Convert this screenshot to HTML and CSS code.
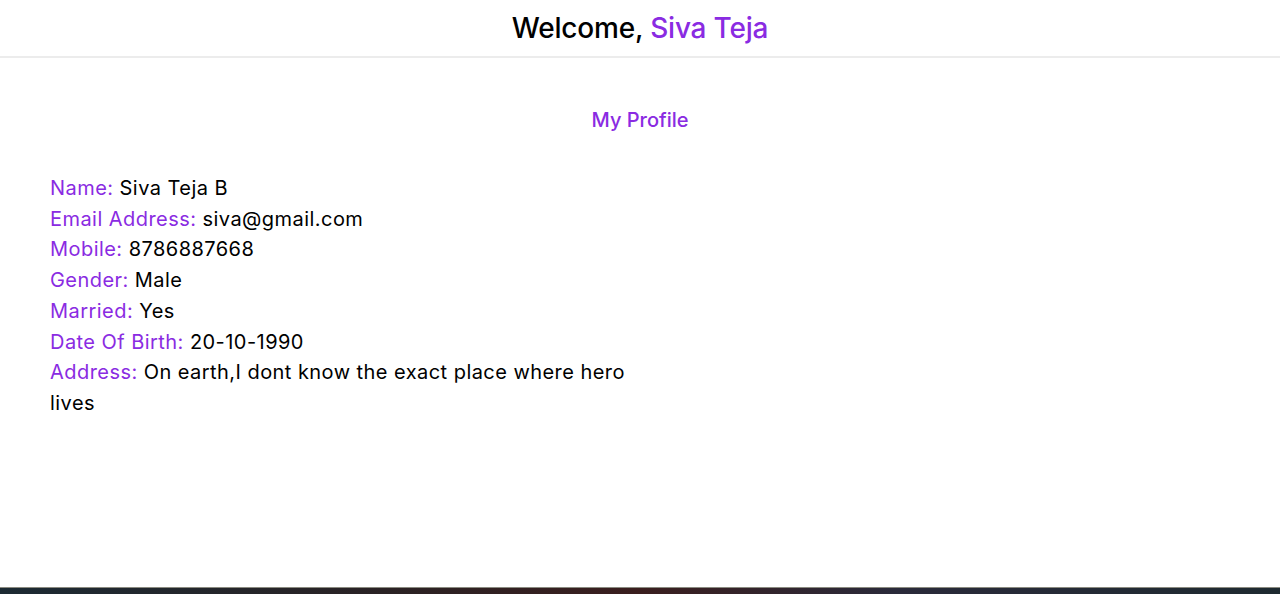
FILE: index.html
```html
<!DOCTYPE html>
<html lang="en">
<head>
<meta charset="utf-8">
<title>Profile</title>
<link rel="stylesheet" href="styles.css">
</head>
<body>
<div class="page">
  <header class="topbar">
    <h1 class="welcome">Welcome, <span class="accent">Siva Teja</span></h1>
  </header>
  <main class="content">
    <h2 class="section-title">My Profile</h2>
    <div class="details">
      <p class="row"><span class="label">Name:</span> Siva Teja B</p>
      <p class="row"><span class="label">Email Address:</span> siva@gmail.com</p>
      <p class="row"><span class="label">Mobile:</span> 8786887668</p>
      <p class="row"><span class="label">Gender:</span> Male</p>
      <p class="row"><span class="label">Married:</span> Yes</p>
      <p class="row"><span class="label">Date Of Birth:</span> 20-10-1990</p>
      <p class="row"><span class="label">Address:</span> On earth,I dont know the exact place where hero lives</p>
    </div>
  </main>
  <div class="taskbar"></div>
</div>
</body>
</html>
```
FILE: styles.css
```css
* { box-sizing: border-box; }
html, body { margin: 0; padding: 0; }
body {
  font-family: "Inter", "Open Sans", sans-serif;
  color: #000;
  background: #fff;
}
.page {
  height: 594px;
  display: flex;
  flex-direction: column;
}
.topbar {
  height: 58px;
  border-bottom: 2px solid #ececec;
  display: flex;
  align-items: center;
  justify-content: center;
}
.welcome {
  margin: 0;
  font-size: 28px;
  font-weight: 450;
  letter-spacing: -0.2px;
}
.accent { color: #8a2be2; }
.content {
  flex: 1;
  padding: 47px 0 0 50px;
}
.section-title {
  margin: 0 0 38px;
  text-align: center;
  padding-right: 50px;
  font-size: 20px;
  font-weight: 500;
  color: #8a2be2;
  line-height: 30px;
}
.details { width: 590px; }
.row {
  margin: 0;
  font-size: 20px;
  font-weight: 400;
  line-height: 30.7px;
  letter-spacing: 0.45px;
}
.label { color: #8a2be2; }
.taskbar {
  height: 7px;
  background: linear-gradient(90deg, #1c2a33, #2a2224 30%, #3a1e1e 50%, #2a2a3a 70%, #1e2a30);
  border-top: 1px solid #8a8a80;
}
```
